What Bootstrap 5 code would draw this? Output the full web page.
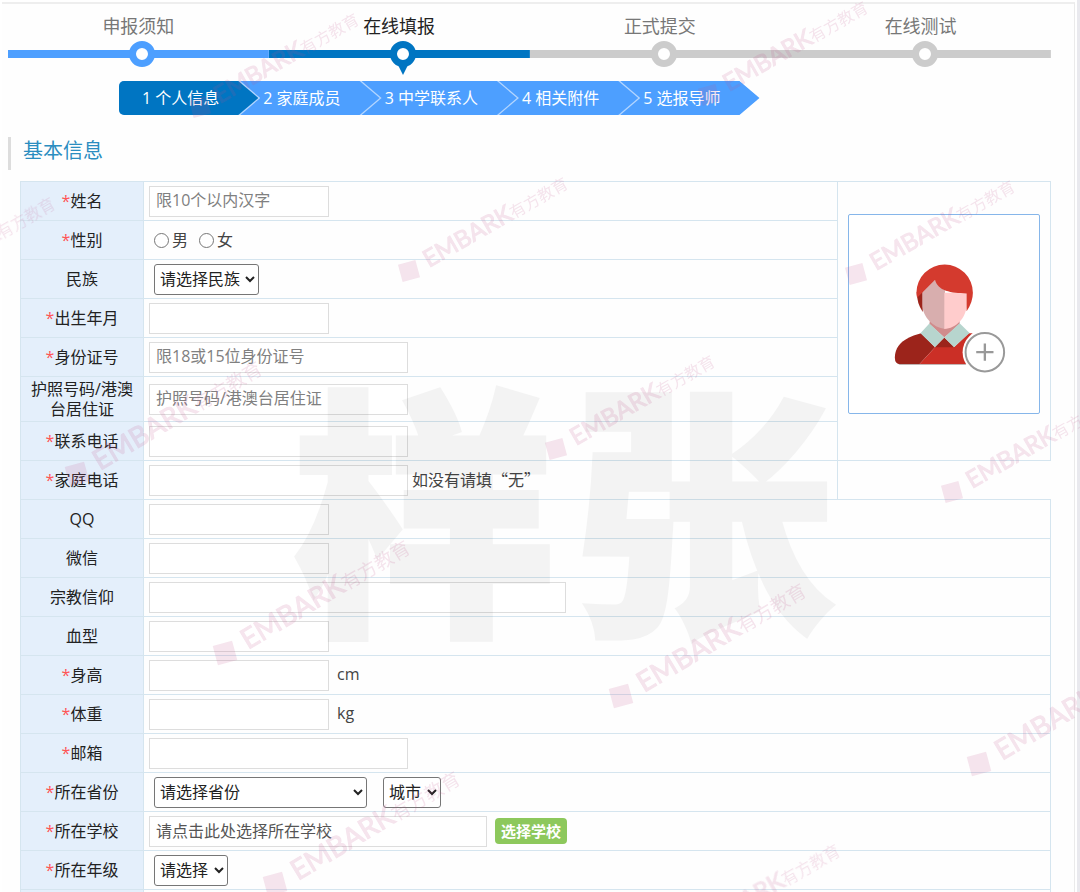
<!DOCTYPE html>
<html lang="zh-CN">
<head>
<meta charset="utf-8">
<meta name="viewport" content="width=device-width, initial-scale=1">
<title>在线填报</title>
<link href="https://cdn.jsdelivr.net/npm/bootstrap@5.3.0/dist/css/bootstrap.min.css" rel="stylesheet">
<style>
  body { font-family: "Open Sans", "Noto Sans CJK SC", sans-serif; font-size: 16px; color: #444; background: #e9e9ee; }
  .page-shell { background: #fff; margin-right: 3px; padding: 2px 2px 0 2px; min-height: 100vh; }
  .panel-main { background: #fefefe; border-top: 2px solid #eee; border-right: 1px solid #eaeaea; padding: 9px 23px 0 6px; min-height: calc(100vh - 2px); }

  .step-name { font-size: 18px; line-height: 26px; color: #777; }
  .step-track { height: 30px; padding-left: 8px; background: linear-gradient(var(--tone), var(--tone)) center / 100% 8px no-repeat; }
  .step-dot { width: 26px; height: 26px; border: 7px solid var(--tone); border-radius: 50%; background: #fff; }
  .step { --tone: #ccc; }
  .step-done { --tone: #4d9fff; }
  .step-now { --tone: #0075c2; }
  .step-now .step-name { color: #222; }
  .step-now .step-dot::after { content: ""; position: absolute; left: 50%; top: 100%; margin: 5px 0 0 -5px; border: 5px solid transparent; border-top: 10px solid var(--tone); border-bottom: 0; }

  .sub-steps { margin: 12px 0 22px 111px; }
  .sub-steps li, .sub-steps a { clip-path: polygon(0 0, calc(100% - 20px) 0, 100% 50%, calc(100% - 20px) 100%, 0 100%); }
  .sub-steps li { background: #b4d6ff; padding-right: 2px; margin-left: -20px; position: relative; }
  .sub-steps li:first-child { margin-left: 0; border-radius: 5px 0 0 5px; overflow: hidden; z-index: 5; }
  .sub-steps li:nth-child(2) { z-index: 4; }
  .sub-steps li:nth-child(3) { z-index: 3; }
  .sub-steps li:nth-child(4) { z-index: 2; }
  .sub-steps li:last-child { padding-right: 0; }
  .sub-steps a { background: #4d9fff; color: #fff; line-height: 34px; padding: 0 39px 0 23px; text-decoration: none; }
  .sub-steps .now-link { background: #0075c2; }

  .section-title { font-size: 20px; font-weight: 400; line-height: 28px; height: 33px; color: #2b8dc0; border-left: 3px solid #ddd; padding-left: 12px; margin: 0 0 11px; }

  .form-grid { margin-left: 12px; width: calc(100% - 12px); border-collapse: collapse; }
  .form-grid th, .form-grid td { border: 1px solid #d5e5ef; height: 39px; padding: 0 6px; }
  .form-grid th { width: 123px; background: #e4effb; color: #222; font-weight: 400; text-align: center; line-height: 20px; }
  .form-grid td { padding-left: 5px; }
  .form-grid .tall-row th { height: 45px; }
  .form-grid .stub-row > * { height: 2px; border-bottom: 0; }
  .must { color: #f55; }
  .field { height: 31px; border: 1px solid #ddd; border-radius: 0; padding: 0 6px 2px; background: #fff; font-size: 16px; color: #555; }
  .field::placeholder { color: #808080; opacity: 1; }
  .w-s { width: 180px; } .w-m { width: 259px; } .w-l { width: 338px; } .w-xl { width: 417px; }
  .unit { font-family: "Open Sans", "Noto Sans CJK SC", sans-serif; padding-bottom: 3px; }
  .unit-cn { font-family: "Noto Sans CJK SC", sans-serif; }
  .pick { height: 31px; border: 1px solid #767676; border-radius: 3px; background: #fff; color: #222; font-size: 16px; padding: 0 1px; margin-left: 5px; }
  .pick-nation { width: 105px; } .pick-prov { width: 213px; } .pick-city { width: 58px; } .pick-grade { width: 74px; }
  .radio-set { padding-left: 5px; gap: 11px; }
  .radio-set input { width: 15px; height: 15px; margin: 0 3px 0 0; }
  .btn-school { background: #8dc85c; color: #fff; font-weight: 700; font-size: 15px; line-height: 26px; height: 26px; padding: 0 6px; border: 0; border-radius: 4px; }
  .btn-school:hover { background: #7cb84c; color: #fff; }
  .form-grid .photo-cell { width: 213px; vertical-align: top; padding: 32px 10px 0; }
  .photo-box { width: 100%; border: 1px solid #86b6ea; border-radius: 2px; background: #fff; padding: 0; }

  .marks { z-index: 10; pointer-events: none; }
  .marks text { font-family: Lato, "Noto Sans CJK SC", sans-serif; }
  .stamp-set { fill: #c0508a; stroke: #c0508a; opacity: .15; }
  .specimen { font-size: 264px; font-weight: 900; fill: #000; stroke: #000; stroke-width: 4px; opacity: .04; }
</style>
<script src="https://cdn.jsdelivr.net/npm/bootstrap@5.3.0/dist/js/bootstrap.bundle.min.js"></script>
</head>
<body>
<div class="position-relative overflow-hidden">
<div class="page-shell">
<main class="panel-main">
  <ol class="list-unstyled d-flex text-center m-0">
    <li class="step step-done flex-fill w-25"><div class="step-name">申报须知</div><div class="step-track d-flex align-items-center justify-content-center"><span class="step-dot position-relative"></span></div></li>
    <li class="step step-now flex-fill w-25"><div class="step-name">在线填报</div><div class="step-track d-flex align-items-center justify-content-center"><span class="step-dot position-relative"></span></div></li>
    <li class="step flex-fill w-25"><div class="step-name">正式提交</div><div class="step-track d-flex align-items-center justify-content-center"><span class="step-dot position-relative"></span></div></li>
    <li class="step flex-fill w-25"><div class="step-name">在线测试</div><div class="step-track d-flex align-items-center justify-content-center"><span class="step-dot position-relative"></span></div></li>
  </ol>

  <ul class="sub-steps list-unstyled d-flex">
    <li><a class="d-block now-link" href="#">1 个人信息</a></li>
    <li><a class="d-block" href="#">2 家庭成员</a></li>
    <li><a class="d-block" href="#">3 中学联系人</a></li>
    <li><a class="d-block" href="#">4 相关附件</a></li>
    <li><a class="d-block" href="#">5 选报导师</a></li>
  </ul>

  <h2 class="section-title">基本信息</h2>

  <form>
  <table class="form-grid">
    <tbody>
    <tr><th><label for="name"><span class="must">*</span>姓名</label></th><td><input class="field w-s" id="name" type="text" placeholder="限10个以内汉字"></td>
      <td class="photo-cell" rowspan="7">
        <button type="button" class="photo-box d-block" aria-label="上传照片">
          <svg class="d-block w-100" viewBox="208 134 572 597" aria-hidden="true">
            <path fill="#9c241b" d="M412 366 L430 362 V426 Q412 400 412 366Z"/>
            <path fill="#d08c8c" d="M452 450 H541 V462 L495 503 L450 462Z"/>
            <path fill="#d8aeae" d="M429 362 L467 326 L497 350 V477 C462 474 429 440 429 405Z"/>
            <path fill="#ffcccc" d="M495 368 H562 V405 C562 442 530 476 495 477Z"/>
            <path fill="#d43a2e" d="M411 368 A85 85 0 0 1 581 368 Q581 396 562 424 V370 C515 370 475 362 467 329 L413 383 Q411 376 411 368Z"/>
            <path fill="#9c241b" d="M425 490 C385 500 346 520 346 564 Q346 583 362 583 H420 L467 532Z"/>
            <path fill="#cb2f26" d="M467 532 L495 508 L524 532 L568 490 H580 L562 583 H420Z"/>
            <path fill="#9c241b" d="M495 503 L526 532 H465Z"/>
            <path fill="#b7d5ce" d="M450 461 L495 503 L467 532 L423 490Z M541 460 L571 489 L524 532 L495 503Z"/>
            <path stroke="#aaa" stroke-width="2" d="M358 584 H560"/>
            <circle cx="617" cy="547" r="67" fill="#fff"/>
            <circle cx="617" cy="547" r="58" fill="#fff" stroke="#999" stroke-width="6"/>
            <path stroke="#999" stroke-width="7" d="M591 547 H643 M617 521 V573"/>
          </svg>
        </button>
      </td></tr>
    <tr><th><span class="must">*</span>性别</th><td><div class="radio-set d-flex"><label class="d-flex align-items-center"><input type="radio" name="sex">男</label><label class="d-flex align-items-center"><input type="radio" name="sex">女</label></div></td></tr>
    <tr><th><label for="nation">民族</label></th><td><select class="pick pick-nation" id="nation"><option>请选择民族</option></select></td></tr>
    <tr><th><label for="birth"><span class="must">*</span>出生年月</label></th><td><input class="field w-s" id="birth" type="text"></td></tr>
    <tr><th><label for="idno"><span class="must">*</span>身份证号</label></th><td><input class="field w-m" id="idno" type="text" placeholder="限18或15位身份证号"></td></tr>
    <tr class="tall-row"><th><label for="passport">护照号码/港澳台居住证</label></th><td><input class="field w-m" id="passport" type="text" placeholder="护照号码/港澳台居住证"></td></tr>
    <tr><th><label for="tel"><span class="must">*</span>联系电话</label></th><td><input class="field w-m" id="tel" type="text"></td></tr>
    <tr><th><label for="home"><span class="must">*</span>家庭电话</label></th><td><div class="d-flex align-items-center gap-1"><input class="field w-m" id="home" type="text"><span class="unit unit-cn">如没有请填“无”</span></div></td></tr>
    <tr><th><label for="qq">QQ</label></th><td colspan="2"><input class="field w-s" id="qq" type="text"></td></tr>
    <tr><th><label for="wechat">微信</label></th><td colspan="2"><input class="field w-s" id="wechat" type="text"></td></tr>
    <tr><th><label for="faith">宗教信仰</label></th><td colspan="2"><input class="field w-xl" id="faith" type="text"></td></tr>
    <tr><th><label for="blood">血型</label></th><td colspan="2"><input class="field w-s" id="blood" type="text"></td></tr>
    <tr><th><label for="height"><span class="must">*</span>身高</label></th><td colspan="2"><div class="d-flex align-items-center gap-2"><input class="field w-s" id="height" type="text"><span class="unit">cm</span></div></td></tr>
    <tr><th><label for="weight"><span class="must">*</span>体重</label></th><td colspan="2"><div class="d-flex align-items-center gap-2"><input class="field w-s" id="weight" type="text"><span class="unit">kg</span></div></td></tr>
    <tr><th><label for="mail"><span class="must">*</span>邮箱</label></th><td colspan="2"><input class="field w-m" id="mail" type="email"></td></tr>
    <tr><th><label for="prov"><span class="must">*</span>所在省份</label></th><td colspan="2"><div class="d-flex"><select class="pick pick-prov me-2" id="prov"><option>请选择省份</option></select><select class="pick pick-city ms-2" aria-label="城市"><option>城市</option></select></div></td></tr>
    <tr><th><label for="school"><span class="must">*</span>所在学校</label></th><td colspan="2"><div class="d-flex align-items-center gap-2"><input class="field w-l" id="school" type="text" value="请点击此处选择所在学校" readonly><button type="button" class="btn btn-school">选择学校</button></div></td></tr>
    <tr><th><label for="grade"><span class="must">*</span>所在年级</label></th><td colspan="2"><select class="pick pick-grade" id="grade"><option>请选择</option></select></td></tr>
    <tr class="stub-row"><th></th><td colspan="2"></td></tr>
    </tbody>
  </table>
  </form>
</main>
</div>

<svg class="marks position-absolute top-0 start-0 w-100 h-100" aria-hidden="true">
  <defs>
    <g id="stamp">
      <rect x="-9" y="-9" width="18" height="18" stroke="none" transform="rotate(-15)"/>
      <g transform="translate(20 -3) rotate(-30)">
        <text font-size="24" stroke-width="1">EMBARK</text>
        <text x="98" font-size="16" stroke="none">有方教育</text>
      </g>
    </g>
    <g id="stamp-lg">
      <rect x="-10" y="-10" width="20" height="20" stroke="none" transform="rotate(-15)"/>
      <g transform="translate(23 -3) rotate(-31)">
        <text font-size="28" stroke-width="1">EMBARK</text>
        <text x="115" font-size="19" stroke="none">有方教育</text>
      </g>
    </g>
  </defs>
  <text class="specimen" y="615"><tspan x="292">样</tspan><tspan x="570">张</tspan></text>
  <g class="stamp-set">
    <use href="#stamp" x="200" y="107"/>
    <use href="#stamp" x="709" y="95"/>
    <use href="#stamp" x="-104" y="291"/>
    <use href="#stamp" x="409" y="271"/>
    <use href="#stamp" x="856" y="274"/>
    <use href="#stamp-lg" x="77" y="474"/>
    <use href="#stamp" x="556" y="449"/>
    <use href="#stamp" x="952" y="492"/>
    <use href="#stamp-lg" x="225" y="653"/>
    <use href="#stamp-lg" x="621" y="696"/>
    <use href="#stamp-lg" x="979" y="764"/>
    <use href="#stamp-lg" x="275" y="884"/>
    <use href="#stamp" x="681" y="938"/>
  </g>
</svg>
</div>
</body>
</html>
